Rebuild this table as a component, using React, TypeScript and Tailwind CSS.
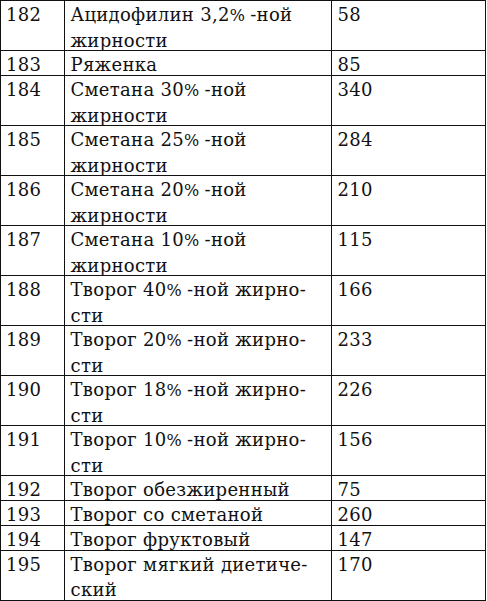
import React from "react";

const rows: [string, string[], string][] = [
  ["182", ["Ацидофилин 3,2%|-ной", "жирности"], "58"],
  ["183", ["Ряженка"], "85"],
  ["184", ["Сметана 30%|-ной", "жирности"], "340"],
  ["185", ["Сметана 25%|-ной", "жирности"], "284"],
  ["186", ["Сметана 20%|-ной", "жирности"], "210"],
  ["187", ["Сметана 10%|-ной", "жирности"], "115"],
  ["188", ["Творог 40%|-ной жирно-", "сти"], "166"],
  ["189", ["Творог 20%|-ной жирно-", "сти"], "233"],
  ["190", ["Творог 18%|-ной жирно-", "сти"], "226"],
  ["191", ["Творог 10%|-ной жирно-", "сти"], "156"],
  ["192", ["Творог обезжиренный"], "75"],
  ["193", ["Творог со сметаной"], "260"],
  ["194", ["Творог фруктовый"], "147"],
  ["195", ["Творог мягкий диетиче-", "ский"], "170"],
];

function Line({ text }: { text: string }) {
  if (!text.includes("|")) return <div>{text}</div>;
  const [a, b] = text.split("|");
  const pre = a.slice(0, -1);
  return (
    <div>
      {pre}
      <span className="text-[16px]">%</span>
      <span className="ml-[5px]">{b}</span>
    </div>
  );
}

export default function App() {
  return (
    <div className="w-[487px] h-[601px] bg-white overflow-hidden">
      <div
        className="w-[486px] border-t-[1.5px] border-l-[1.5px] border-[#111] text-[#111] text-[18px] leading-[25px] tracking-[0.3px]"
        style={{ fontFamily: '"DejaVu Serif", "Liberation Serif", serif' }}
      >
        {rows.map(([n, lines, v]) => (
          <div
            key={n}
            className={`flex border-b-[1.5px] border-[#111] ${lines.length === 2 ? "h-[50px]" : "h-[25px]"}`}
          >
            <div className="w-[63.5px] shrink-0 border-r-[1.5px] border-[#111] pl-[5px] pt-[1px]">{n}</div>
            <div className="w-[267px] shrink-0 border-r-[1.5px] border-[#111] pl-[6px] pt-[1px] whitespace-nowrap">
              {lines.map((l, i) => (
                <Line key={i} text={l} />
              ))}
            </div>
            <div className="flex-1 border-r-[1.5px] border-[#111] pl-[6px] pt-[1px]">{v}</div>
          </div>
        ))}
      </div>
    </div>
  );
}
